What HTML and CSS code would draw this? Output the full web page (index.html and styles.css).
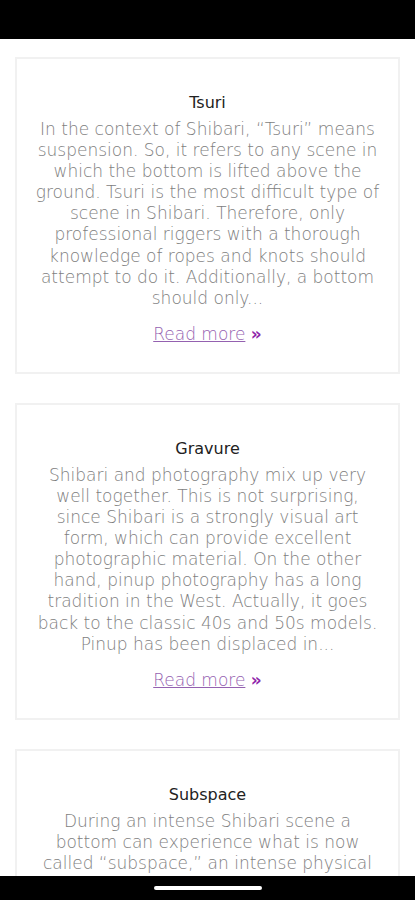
FILE: index.html
```html
<!DOCTYPE html>
<html lang="en">
<head>
    <meta charset="UTF-8">
    <meta name="viewport" content="width=device-width, initial-scale=1.0">
    <title>Shibari | Articles</title>
    <link rel="stylesheet" href="styles.css">
</head>
<body>
    <div class="status-bar"></div>
    <div class="feed">
        <div class="card">
            <h2 class="card-title">Tsuri</h2>
            <p class="card-text">In the context of Shibari, “Tsuri” means suspension. So, it refers to any scene in which the bottom is lifted above the ground. Tsuri is the most difficult type of scene in Shibari. Therefore, only professional riggers with a thorough knowledge of ropes and knots should attempt to do it. Additionally, a bottom should only...</p>
            <a class="read-more" href="#"><span>Read more</span> <b>»</b></a>
        </div>
        <div class="card">
            <h2 class="card-title">Gravure</h2>
            <p class="card-text">Shibari and photography mix up very well together. This is not surprising, since Shibari is a strongly visual art form, which can provide excellent photographic material. On the other hand, pinup photography has a long tradition in the West. Actually, it goes back to the classic 40s and 50s models. Pinup has been displaced in...</p>
            <a class="read-more" href="#"><span>Read more</span> <b>»</b></a>
        </div>
        <div class="card">
            <h2 class="card-title">Subspace</h2>
            <p class="card-text">During an intense Shibari scene a bottom can experience what is now called “subspace,” an intense physical and emotional state that many people compare to a deep trance or to a sort of meditation. It is important that the rigger knows how to recognize...</p>
            <a class="read-more" href="#"><span>Read more</span> <b>»</b></a>
        </div>
    </div>
    <div class="nav-bar"><div class="nav-pill"></div></div>
</body>
</html>
```

FILE: styles.css
```css
*{
    margin: 0;
    padding: 0;
    box-sizing: border-box;
}
body{
    width: 100vw;
    height: 100vh;
    overflow: hidden;
    background: #fff;
    font-family: "DejaVu Sans", "Open Sans", sans-serif;
    display: flex;
    flex-direction: column;
}
.status-bar{
    height: 39px;
    flex-shrink: 0;
    background: #000;
}
.feed{
    flex: 1;
    overflow: hidden;
    padding: 18px 15px 0;
    display: flex;
    flex-direction: column;
    gap: 29px;
}
.card{
    flex-shrink: 0;
    border: 2px solid #f1f1f1;
    padding: 34px 15px 27px;
    text-align: center;
}
.card-title{
    font-size: 16px;
    line-height: 20px;
    font-weight: 400;
    color: #222;
    margin-bottom: 6px;
}
.card-text{
    font-size: 17px;
    line-height: 21.1px;
    font-weight: 200;
    color: #7e7e7e;
}
.read-more{
    display: inline-block;
    margin-top: 15px;
    font-size: 17px;
    line-height: 21px;
    font-weight: 200;
    text-decoration: none;
}
.read-more span{
    color: #9461b0;
    text-decoration: underline;
}
.read-more b{
    color: #8e24aa;
    font-weight: 700;
}
.nav-bar{
    height: 24px;
    flex-shrink: 0;
    background: #000;
    display: flex;
    justify-content: center;
    padding-top: 10px;
}
.nav-pill{
    width: 108px;
    height: 4px;
    border-radius: 2px;
    background: #fff;
}
```
